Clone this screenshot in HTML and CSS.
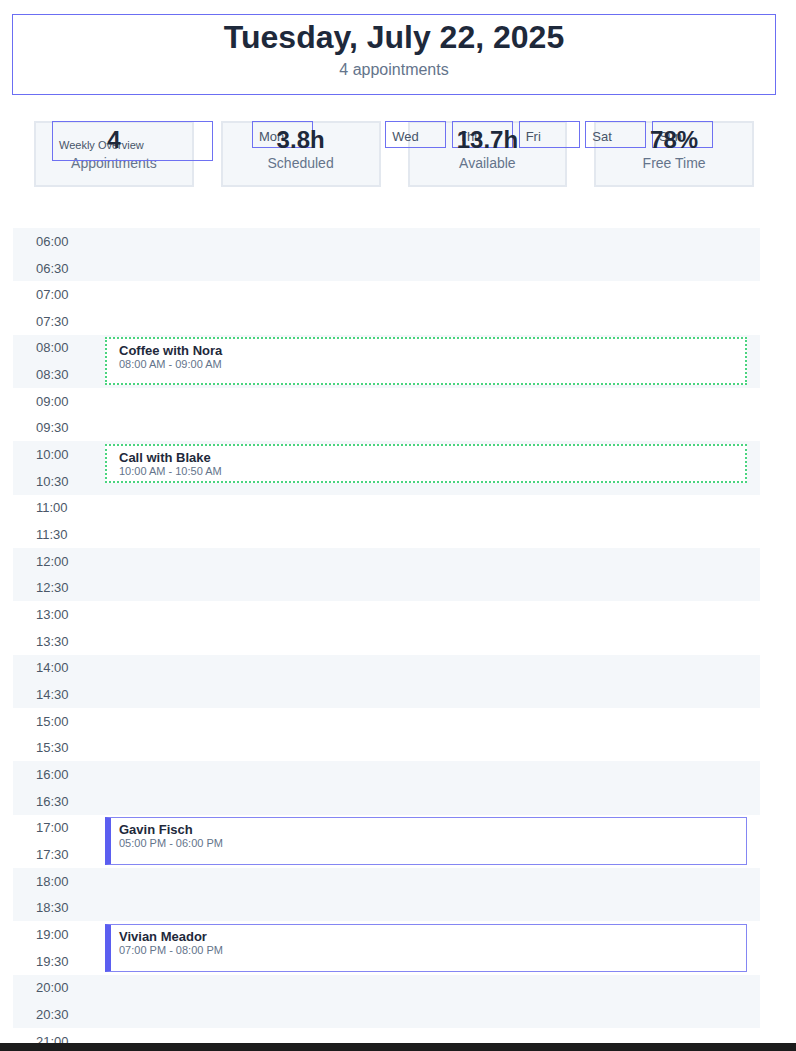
FILE: index.html
```html
<!DOCTYPE html>
<html lang="en">
<head>
<meta charset="utf-8">
<title>Tuesday, July 22, 2025</title>
<link rel="stylesheet" href="styles.css">
</head>
<body>
<div class="page">
  <header class="day-header">
    <h1 class="day-title">Tuesday, July 22, 2025</h1>
    <p class="day-sub">4 appointments</p>
  </header>

  <section class="stats-wrap">
    <div class="stats">
      <div class="stat"><div class="stat-num">4</div><div class="stat-label">Appointments</div></div>
      <div class="stat"><div class="stat-num">3.8h</div><div class="stat-label">Scheduled</div></div>
      <div class="stat"><div class="stat-num">13.7h</div><div class="stat-label">Available</div></div>
      <div class="stat"><div class="stat-num">78%</div><div class="stat-label">Free Time</div></div>
    </div>
    <div class="week">
      <div class="week-title">Weekly Overview</div>
      <div class="week-days">
        <div class="week-day">Mon</div>
        <div class="week-day is-today">Tue</div>
        <div class="week-day">Wed</div>
        <div class="week-day">Thu</div>
        <div class="week-day">Fri</div>
        <div class="week-day">Sat</div>
        <div class="week-day">Sun</div>
      </div>
    </div>
  </section>

  <section class="timeline">
    <div class="hour"><div class="slot">06:00</div><div class="slot">06:30</div></div>
    <div class="hour"><div class="slot">07:00</div><div class="slot">07:30</div></div>
    <div class="hour"><div class="slot">08:00</div><div class="slot">08:30</div></div>
    <div class="hour"><div class="slot">09:00</div><div class="slot">09:30</div></div>
    <div class="hour"><div class="slot">10:00</div><div class="slot">10:30</div></div>
    <div class="hour"><div class="slot">11:00</div><div class="slot">11:30</div></div>
    <div class="hour"><div class="slot">12:00</div><div class="slot">12:30</div></div>
    <div class="hour"><div class="slot">13:00</div><div class="slot">13:30</div></div>
    <div class="hour"><div class="slot">14:00</div><div class="slot">14:30</div></div>
    <div class="hour"><div class="slot">15:00</div><div class="slot">15:30</div></div>
    <div class="hour"><div class="slot">16:00</div><div class="slot">16:30</div></div>
    <div class="hour"><div class="slot">17:00</div><div class="slot">17:30</div></div>
    <div class="hour"><div class="slot">18:00</div><div class="slot">18:30</div></div>
    <div class="hour"><div class="slot">19:00</div><div class="slot">19:30</div></div>
    <div class="hour"><div class="slot">20:00</div><div class="slot">20:30</div></div>
    <div class="hour"><div class="slot">21:00</div><div class="slot">21:30</div></div>

    <div class="event event-tentative" style="top:109px;height:48px">
      <div class="event-title">Coffee with Nora</div>
      <div class="event-time">08:00 AM - 09:00 AM</div>
    </div>
    <div class="event event-tentative" style="top:216px;height:39px">
      <div class="event-title">Call with Blake</div>
      <div class="event-time">10:00 AM - 10:50 AM</div>
    </div>
    <div class="event event-confirmed" style="top:589px;height:48px">
      <div class="event-title">Gavin Fisch</div>
      <div class="event-time">05:00 PM - 06:00 PM</div>
    </div>
    <div class="event event-confirmed" style="top:696px;height:48px">
      <div class="event-title">Vivian Meador</div>
      <div class="event-time">07:00 PM - 08:00 PM</div>
    </div>
  </section>
</div>
<div class="bottom-bar"></div>
</body>
</html>
```

FILE: styles.css
```css
* { box-sizing: border-box; }

html, body {
  margin: 0;
  padding: 0;
  background: #ffffff;
  font-family: "Liberation Sans", Arial, sans-serif;
  color: #1e293b;
}

.page {
  padding: 14px 20px 0 12px;
}

.day-header {
  border: 1px solid #6b6ef3;
  padding: 3px 16px 15px;
  text-align: center;
}

.day-title {
  margin: 0;
  font-size: 32px;
  line-height: 38px;
  font-weight: 700;
  color: #1e293b;
}

.day-sub {
  margin: 4px 0 0;
  font-size: 16px;
  line-height: 19px;
  color: #64748b;
}

.stats-wrap {
  position: relative;
  margin-top: 26px;
}

.stats {
  max-width: 720px;
  margin: 0 auto;
  display: grid;
  grid-template-columns: repeat(4, 1fr);
  gap: 27px;
}

.stat {
  background: #f4f7fa;
  border: 2px solid #e3e8ef;
  padding: 3px 8px 14px;
  text-align: center;
}

.stat-num {
  position: relative;
  z-index: 2;
  font-size: 24px;
  line-height: 28px;
  font-weight: 700;
  color: #1e293b;
}

.stat-label {
  margin-top: 1px;
  font-size: 14px;
  line-height: 16px;
  color: #64748b;
}

.week {
  position: absolute;
  top: 0;
  left: 40px;
  display: flex;
  align-items: flex-start;
  gap: 39px;
  z-index: 1;
}

.week-title {
  width: 161px;
  height: 40px;
  border: 1px solid #6e71f2;
  padding: 16px 6px 0;
  font-size: 11px;
  line-height: 14px;
  color: #475569;
}

.week-days {
  display: flex;
  gap: 5.67px;
}

.week-day {
  width: 61px;
  height: 27px;
  border: 1px solid #6e71f2;
  padding: 7px 6px 0;
  font-size: 13px;
  line-height: 15px;
  color: #475569;
}

.week-day.is-today {
  visibility: hidden;
}

.timeline {
  position: relative;
  margin: 41px 16px 0 1px;
}

.hour {
  height: 53.333px;
  display: flex;
  flex-direction: column;
}

.hour:nth-child(odd) {
  background: #f4f7fa;
}

.slot {
  flex: 1;
  display: flex;
  align-items: center;
  padding-left: 23px;
  font-size: 13px;
  color: #4b5768;
}

.event {
  position: absolute;
  left: 92px;
  right: 13px;
  background: #ffffff;
  padding: 4px 12px;
}

.event-tentative {
  border: 2px dotted #4ad47f;
}

.event-confirmed {
  border: 1px solid #8486f3;
  border-left: 6px solid #5b5ef0;
  padding: 4px 12px 4px 8px;
}

.event-title {
  font-size: 13px;
  line-height: 15px;
  font-weight: 700;
  color: #1e293b;
}

.event-time {
  font-size: 11px;
  line-height: 13px;
  color: #64748b;
}

.bottom-bar {
  position: fixed;
  left: 0;
  right: 0;
  bottom: 0;
  height: 8px;
  background: #1c1c1c;
  z-index: 10;
}
```
